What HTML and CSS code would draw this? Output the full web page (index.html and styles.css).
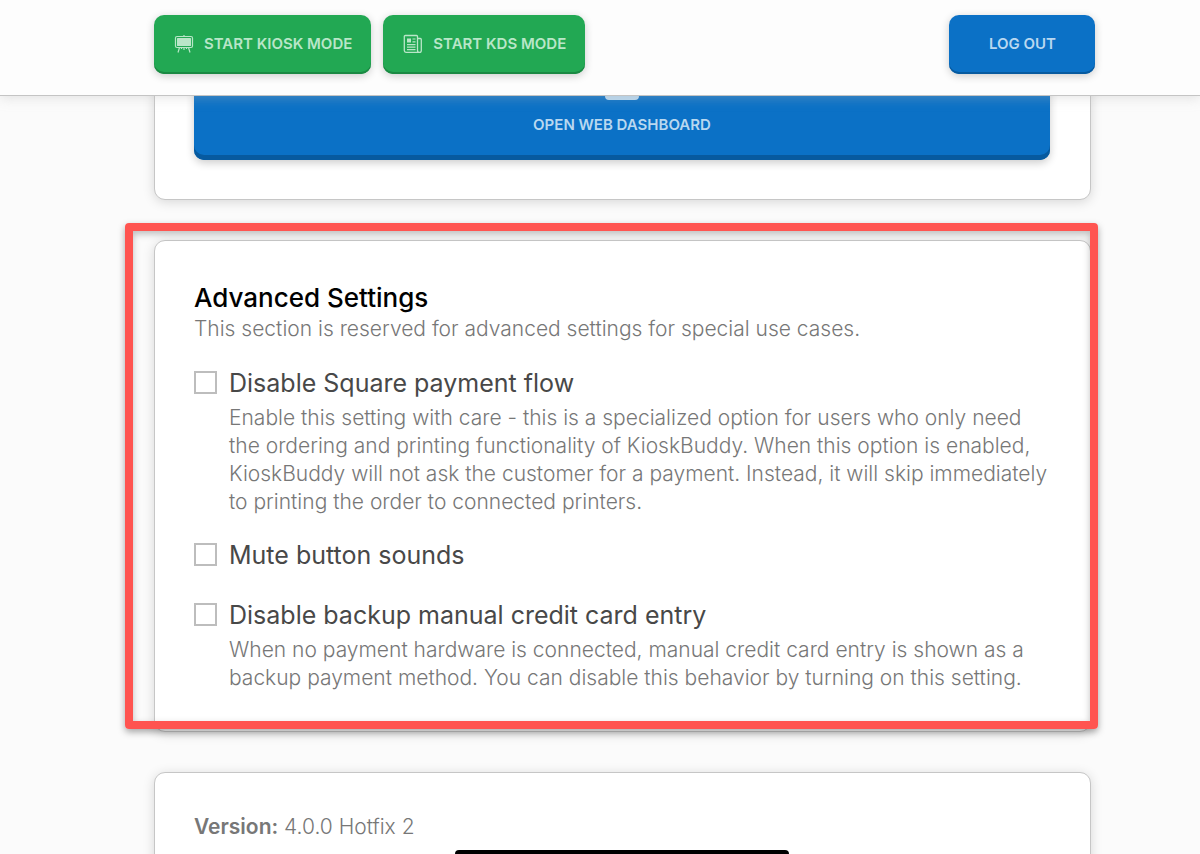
FILE: index.html
```html
<!DOCTYPE html>
<html lang="en">
<head>
<meta charset="utf-8">
<meta name="viewport" content="width=device-width, initial-scale=1">
<title>KioskBuddy Settings</title>
<link rel="stylesheet" href="styles.css">
</head>
<body>
<header class="topbar">
  <button class="btn btn-green" type="button">
    <svg class="icon" viewBox="0 0 20 20" fill="none" stroke="currentColor" aria-hidden="true">
      <rect x="1.500" y="2.500" width="17" height="11" rx="1.500" stroke-width="1.200"/>
      <rect x="3" y="4" width="14" height="8" rx="0.500" fill="currentColor" stroke="none"/>
      <path stroke-width="1.200" d="M10 1v1.500M5.500 13.500 4 18.500M14.500 13.500 16 18.500M7.500 13.500v1.500M12.500 13.500v1.500M10 13.500v2.500"/>
    </svg>
    Start Kiosk Mode
  </button>
  <button class="btn btn-green" type="button">
    <svg class="icon" viewBox="0 0 20 20" fill="none" stroke="currentColor" aria-hidden="true">
      <path stroke-width="1.300" d="M17 18.300H3A1.700 1.700 0 0 1 1.300 16.600V2.500a1 1 0 0 1 1-1H13.500a1 1 0 0 1 1 1V16.500a1.800 1.800 0 0 0 3.800 0V5.500a1 1 0 0 0-1-1H14.500"/>
      <rect x="4" y="4.500" width="4" height="4" fill="currentColor" stroke="none"/>
      <path stroke-width="1.200" d="M9.500 5H12.500M9.500 7.800H12.500M4 10.600h8.500M4 13.100h8.500M4 15.600h8.500"/>
    </svg>
    Start KDS Mode
  </button>
  <button class="btn btn-blue btn-logout" type="button">Log Out</button>
</header>
<main class="content">
  <section class="card card-dashboard">
    <button class="btn btn-blue btn-dashboard" type="button">
      <svg class="icon-large" viewBox="0 0 34 34" fill="currentColor" aria-hidden="true">
        <path fill-rule="evenodd" d="M4 0h26a4 4 0 0 1 4 4v26a4 4 0 0 1-4 4H4a4 4 0 0 1-4-4V4a4 4 0 0 1 4-4zM3 8v17h28V8z"/>
      </svg>
      Open Web Dashboard
    </button>
  </section>
  <section class="card card-advanced">
    <h2 class="title">Advanced Settings</h2>
    <p class="text intro">This section is reserved for advanced settings for special use cases.</p>
    <div class="option">
      <input class="check" type="checkbox" id="square">
      <div class="option-body">
        <label class="option-label" for="square">Disable Square payment flow</label>
        <p class="text">Enable this setting with care - this is a specialized option for users who only need the ordering and printing functionality of KioskBuddy. When this option is enabled, KioskBuddy will not ask the customer for a payment. Instead, it will skip immediately to printing the order to connected printers.</p>
      </div>
    </div>
    <div class="option">
      <input class="check" type="checkbox" id="mute">
      <div class="option-body">
        <label class="option-label" for="mute">Mute button sounds</label>
      </div>
    </div>
    <div class="option">
      <input class="check" type="checkbox" id="backup">
      <div class="option-body">
        <label class="option-label" for="backup">Disable backup manual credit card entry</label>
        <p class="text">When no payment hardware is connected, manual credit card entry is shown as a backup payment method. You can disable this behavior by turning on this setting.</p>
      </div>
    </div>
    <div class="highlight"></div>
  </section>
  <section class="card card-version">
    <p class="text"><strong class="strong">Version:</strong> 4.0.0 Hotfix 2</p>
    <div class="redacted"></div>
  </section>
</main>
</body>
</html>
```
FILE: styles.css
```css
* {
  box-sizing: border-box;
}

body {
  display: flex;
  flex-direction: column;
  height: 100vh;
  margin: 0;
  overflow: hidden;
  background: #fbfbfb;
  color: #777;
  font-family: Inter, "Liberation Sans", sans-serif;
}

.topbar {
  position: relative;
  z-index: 2;
  display: flex;
  flex: none;
  gap: 12px;
  padding: 15px 105px 21px 154px;
  border-bottom: 1px solid #c4c4c4;
  background: #fdfdfd;
  box-shadow: 0 1px 12px rgba(180, 180, 180, 0.4);
}

.btn {
  display: flex;
  align-items: center;
  justify-content: center;
  gap: 10px;
  height: 59px;
  padding: 0 19px 2px 20px;
  border: 0;
  border-radius: 10px;
  font-family: inherit;
  font-size: 15px;
  font-weight: 600;
  text-transform: uppercase;
  white-space: nowrap;
}

.btn-green {
  background: #22a853;
  color: #b9e6c8;
  box-shadow: inset 0 -2px #1b8943, 0 2px 8px rgba(0, 0, 0, 0.2);
}

.btn-blue {
  background: #0b71c6;
  color: #b9d8f0;
  box-shadow: inset 0 -2px #075a9f, 0 2px 8px rgba(0, 0, 0, 0.2);
}

.btn-logout {
  margin-left: auto;
  padding: 0 39px 2px 40px;
}

.icon {
  width: 20px;
  height: 20px;
}

.content {
  flex: 1;
  min-height: 0;
  padding: 0 109px 0 154px;
  overflow: hidden;
}

.card {
  position: relative;
  margin-bottom: 40px;
  padding: 40px 40px 39px 39px;
  border: 1px solid #c6c6c6;
  border-radius: 11px;
  background: #fff;
  box-shadow: 0 2px 12px rgba(0, 0, 0, 0.15);
}

.card-dashboard {
  margin-top: -88px;
}

.btn-dashboard {
  flex-direction: column;
  gap: 15px;
  width: 100%;
  height: 111px;
  padding: 0 20px 10px;
  box-shadow: inset 0 -5px #075a9f, 0 3px 8px rgba(0, 0, 0, 0.2);
}

.icon-large {
  width: 34px;
  height: 34px;
}

.title {
  margin: 0;
  color: #000;
  font-size: 26px;
  font-weight: 500;
  line-height: 34px;
}

.text {
  margin: 0;
  font-size: 21px;
  font-weight: 300;
  line-height: 28px;
}

.intro {
  margin-bottom: 24px;
}

.strong {
  font-weight: 600;
}

.option {
  display: flex;
  gap: 12px;
}

.option + .option {
  margin-top: 23px;
}

.check {
  flex: none;
  width: 23px;
  height: 23px;
  margin: 4px 0 0;
  border: 2px solid #bdbdbd;
  background: #fff;
  appearance: none;
}

.check:checked {
  background: #0b71c6;
}

.option-body {
  flex: 1;
}

.option-label {
  display: block;
  margin-bottom: 5px;
  color: #484848;
  font-size: 25px;
  font-weight: 400;
  line-height: 32px;
}

.highlight {
  position: absolute;
  inset: -18px -8px 2px -30px;
  border: 8px solid #ff5450;
  border-radius: 4px;
  box-shadow: 0 3px 7px rgba(0, 0, 0, 0.35), inset 0 3px 7px rgba(0, 0, 0, 0.25);
  pointer-events: none;
}

.redacted {
  width: 334px;
  height: 24px;
  margin: 9px 0 0 261px;
  border-radius: 4px;
  background: #000;
}
```
